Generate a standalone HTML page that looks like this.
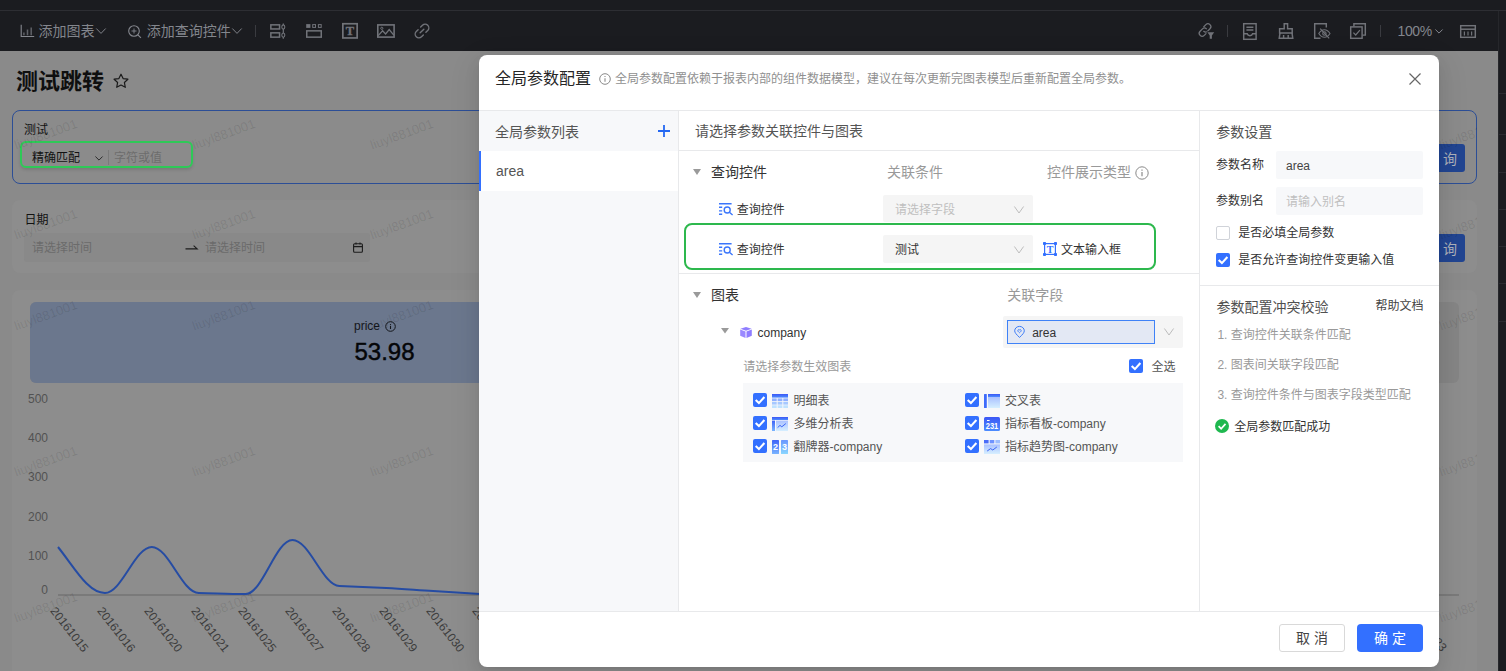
<!DOCTYPE html>
<html lang="zh-CN">
<head>
<meta charset="utf-8">
<title>全局参数配置</title>
<style>
*{box-sizing:border-box;margin:0;padding:0}
html,body{width:1506px;height:671px;overflow:hidden;background:#8a8a8a}
body{position:relative;font-family:"Liberation Sans","Noto Sans CJK SC",sans-serif;font-size:12px;color:#333;line-height:1}
.a{position:absolute;white-space:nowrap}
svg{display:block;overflow:visible}
/* ---------- top bar ---------- */
#top{left:0;top:0;width:1506px;height:50.500px;background:#1b1c20}
#top .ln{left:0;top:10px;width:1506px;height:1px;background:#2d2e33}
#top .t{color:#83868d;font-size:14px;line-height:20px;height:20px;top:21px}
#top .sep{width:1px;height:12px;top:25px;background:#3a3b40}
#top svg{position:absolute}
#side{left:1498px;top:50px;width:8px;height:621px;background:#1b1c20;border-left:1px solid #26272b}
#side i{position:absolute;left:0;width:8px;height:1px;background:#2a2b30}
/* ---------- dimmed page ---------- */
#page{left:0;top:50px;width:1498px;height:621px;background:#8a8a8a;overflow:hidden}
#page .card{background:#8d8d8d;border-radius:6px}
.wm{color:rgba(0,0,0,.1);margin-left:1px;font-size:13px;line-height:16px;transform:rotate(-20deg);transform-origin:0 50%}
.yl{left:20px;width:28px;text-align:right;color:#525252}
.xl{top:553.300px;color:#3c3c3c;transform-origin:0 0;transform:rotate(52deg)}
/* ---------- dialog ---------- */
#dlg{left:479px;top:55px;width:960px;height:612px;background:#fff;border-radius:8px;box-shadow:0 3px 6px -4px rgba(0,0,0,.12),0 6px 16px 0 rgba(0,0,0,.08),0 9px 28px 8px rgba(0,0,0,.05);overflow:hidden}
#dlg .hl{background:#e8e9eb}
.cb{width:14px;height:14px;border-radius:2px;background:#3370ff}
.cb svg{position:absolute;left:0;top:0}
.cb0{width:14px;height:14px;border-radius:2px;background:#fff;border:1px solid #d0d3d9}
.g9{color:#999}
.f14{font-size:14px;line-height:20px;height:20px}
.f12{font-size:12px;line-height:18px;height:18px}
#dlg .f12{margin-top:.5px}
</style>
</head>
<body>
<div id="page" class="a">
<!-- title -->
<div class="a" style="left:16px;top:18px;font-size:22px;line-height:28px;font-weight:bold;color:#0f0f0f">测试跳转</div>
<svg class="a" style="left:113px;top:23px" width="16" height="16" viewBox="0 0 16 16" fill="none" stroke="#1a1a1a" stroke-width="1.2" stroke-linejoin="round"><path d="M8 1.2l2.100 4.400l4.800.6l-3.500 3.300l.9 4.800L8 12l-4.300 2.300l.9-4.800L1.100 6.200l4.800-.6z"/></svg>
<!-- card 1 : selected query control -->
<div class="a" style="left:12px;top:60px;width:1465px;height:74px;border:1px solid #2c4e96;border-radius:8px;background:#8b8b8b"></div>
<div class="a f12" style="left:24px;top:70.500px;color:#121212">测试</div>
<div class="a" style="left:20px;top:91px;width:173px;height:27px;border:2px solid #2ec957;border-radius:6px;box-shadow:0 2px 3px rgba(0,0,0,.12)"></div>
<div class="a f12" style="left:32px;top:99.200px;color:#121212">精确匹配</div>
<svg class="a" style="left:94.600px;top:105.600px" width="8" height="5" viewBox="0 0 8 5" fill="none" stroke="#262626" stroke-width=".950"><path d="M0.400 0.500L4 4.100L7.600 0.500"/></svg>
<div class="a" style="left:108px;top:100px;width:1px;height:15px;background:#7a7a7a"></div>
<div class="a f12" style="left:114px;top:99.200px;color:#6d6d6d">字符或值</div>
<div class="a" style="left:1417px;top:94px;width:48px;height:28px;border-radius:3px;background:#224591;color:#aeb1b9;font-size:14px;line-height:30px;text-align:center">查 询</div>
<!-- card 2 : date -->
<div class="a card" style="left:12px;top:149.800px;width:1465px;height:73.500px;border-radius:8px"></div>
<div class="a f12" style="left:24.500px;top:161px;color:#121212">日期</div>
<div class="a" style="left:24px;top:183.300px;width:346px;height:28.600px;border-radius:3px;background:#898989"></div>
<div class="a f12" style="left:32px;top:188.500px;color:#6b6b6b">请选择时间</div>
<svg class="a" style="left:185px;top:194px" width="13" height="6" viewBox="0 0 13 6" fill="none" stroke="#1c1c1c" stroke-width="1.100"><path d="M0.500 4.900H12.200L8.600 1.600"/></svg>
<div class="a f12" style="left:205px;top:188.500px;color:#6b6b6b">请选择时间</div>
<svg class="a" style="left:352.500px;top:192px" width="10" height="11" viewBox="0 0 10 11" fill="none" stroke="#1c1c1c" stroke-width="1.100"><rect x="0.600" y="1.800" width="8.800" height="8.400" rx="1"/><path d="M0.600 4.600H9.400" stroke-width="1.300"/><path d="M3 0.400V2.600M7 0.400V2.600"/></svg>
<div class="a" style="left:1417px;top:184.300px;width:48px;height:28px;border-radius:3px;background:#224591;color:#aeb1b9;font-size:14px;line-height:30px;text-align:center">查 询</div>
<!-- card 3 : chart -->
<div class="a card" style="left:12px;top:239.700px;width:1465px;height:400px;border-radius:8px"></div>
<div class="a" style="left:30px;top:252px;width:1429px;height:81px;border-radius:6px;background:#858585"></div><div class="a" style="left:30px;top:252px;width:720px;height:81px;border-radius:6px;background:#6b778d"></div>
<div class="a f12" style="left:354px;top:267px;color:#14161b">price</div>
<svg class="a" style="left:384.500px;top:270.800px" width="11" height="11" viewBox="0 0 11 11" fill="none" stroke="#14161b" stroke-width="1"><circle cx="5.500" cy="5.500" r="4.800"/><path d="M5.500 4.800V8" stroke-width="1.100"/><path d="M5.500 3V3.900" stroke-width="1.100"/></svg>
<div class="a" style="left:354.500px;top:288px;font-size:24px;line-height:28px;color:#050608;-webkit-text-stroke:.45px #050608">53.98</div>
<!-- y axis -->
<div class="a f12 yl" style="top:340px">500</div>
<div class="a f12 yl" style="top:378.500px">400</div>
<div class="a f12 yl" style="top:418px">300</div>
<div class="a f12 yl" style="top:457.500px">200</div>
<div class="a f12 yl" style="top:496.500px">100</div>
<div class="a f12 yl" style="top:530.500px">0</div>
<div class="a" style="left:58px;top:544.300px;width:1401px;height:2px;background:#7a7a7a"></div>
<svg class="a" style="left:0;top:0" width="500" height="621" viewBox="0 50 500 621" fill="none"><path d="M58.0 547C74.9 568.1 88.0 593.0 104.9 593C121.8 593.0 134.9 547.0 151.8 547C168.7 547.0 181.8 592.7 198.7 593C215.6 593.3 228.7 594.0 245.6 594C262.5 594.0 275.6 540.0 292.5 540C309.4 540.0 322.5 585.3 339.4 586C356.3 586.7 369.4 587.2 386.3 588C403.2 588.8 416.3 590.0 433.2 591C450.1 592.0 463.2 593.0 480.1 594" stroke="#264ca3" stroke-width="2"/></svg>
<!-- x labels -->
<div class="a f12 xl" style="left:60.3px">20161015</div>
<div class="a f12 xl" style="left:107.2px">20161016</div>
<div class="a f12 xl" style="left:154.1px">20161020</div>
<div class="a f12 xl" style="left:201.0px">20161021</div>
<div class="a f12 xl" style="left:247.9px">20161025</div>
<div class="a f12 xl" style="left:294.8px">20161027</div>
<div class="a f12 xl" style="left:341.7px">20161028</div>
<div class="a f12 xl" style="left:388.6px">20161029</div>
<div class="a f12 xl" style="left:435.5px">20161030</div>
<div class="a f12 xl" style="left:482.4px">20161031</div>
<div class="a f12 xl" style="left:1419.0px">20161123</div>
<div class="a" style="left:12px;top:60px;width:1465px;height:74px;overflow:hidden;border-radius:7px">
<div class="a wm" style="left:1.60px;top:28.0px">liuyl881001</div>
<div class="a wm" style="left:179.80px;top:28.0px">liuyl881001</div>
<div class="a wm" style="left:358.00px;top:28.0px">liuyl881001</div>
<div class="a wm" style="left:536.20px;top:28.0px">liuyl881001</div>
<div class="a wm" style="left:714.40px;top:28.0px">liuyl881001</div>
<div class="a wm" style="left:892.60px;top:28.0px">liuyl881001</div>
<div class="a wm" style="left:1070.80px;top:28.0px">liuyl881001</div>
<div class="a wm" style="left:1249.00px;top:28.0px">liuyl881001</div>
<div class="a wm" style="left:1427.20px;top:28.0px">liuyl881001</div>
</div><div class="a" style="left:12px;top:150px;width:1465px;height:74px;overflow:hidden;border-radius:7px">
<div class="a wm" style="left:1.60px;top:28.0px">liuyl881001</div>
<div class="a wm" style="left:179.80px;top:28.0px">liuyl881001</div>
<div class="a wm" style="left:358.00px;top:28.0px">liuyl881001</div>
<div class="a wm" style="left:536.20px;top:28.0px">liuyl881001</div>
<div class="a wm" style="left:714.40px;top:28.0px">liuyl881001</div>
<div class="a wm" style="left:892.60px;top:28.0px">liuyl881001</div>
<div class="a wm" style="left:1070.80px;top:28.0px">liuyl881001</div>
<div class="a wm" style="left:1249.00px;top:28.0px">liuyl881001</div>
<div class="a wm" style="left:1427.20px;top:28.0px">liuyl881001</div>
</div><div class="a" style="left:12px;top:240.500px;width:1465px;height:381px;overflow:hidden;border-radius:7px">
<div class="a wm" style="left:1.60px;top:28.5px">liuyl881001</div>
<div class="a wm" style="left:1.60px;top:174.5px">liuyl881001</div>
<div class="a wm" style="left:1.60px;top:320.5px">liuyl881001</div>
<div class="a wm" style="left:179.80px;top:28.5px">liuyl881001</div>
<div class="a wm" style="left:179.80px;top:174.5px">liuyl881001</div>
<div class="a wm" style="left:179.80px;top:320.5px">liuyl881001</div>
<div class="a wm" style="left:358.00px;top:28.5px">liuyl881001</div>
<div class="a wm" style="left:358.00px;top:174.5px">liuyl881001</div>
<div class="a wm" style="left:358.00px;top:320.5px">liuyl881001</div>
<div class="a wm" style="left:536.20px;top:28.5px">liuyl881001</div>
<div class="a wm" style="left:536.20px;top:174.5px">liuyl881001</div>
<div class="a wm" style="left:536.20px;top:320.5px">liuyl881001</div>
<div class="a wm" style="left:714.40px;top:28.5px">liuyl881001</div>
<div class="a wm" style="left:714.40px;top:174.5px">liuyl881001</div>
<div class="a wm" style="left:714.40px;top:320.5px">liuyl881001</div>
<div class="a wm" style="left:892.60px;top:28.5px">liuyl881001</div>
<div class="a wm" style="left:892.60px;top:174.5px">liuyl881001</div>
<div class="a wm" style="left:892.60px;top:320.5px">liuyl881001</div>
<div class="a wm" style="left:1070.80px;top:28.5px">liuyl881001</div>
<div class="a wm" style="left:1070.80px;top:174.5px">liuyl881001</div>
<div class="a wm" style="left:1070.80px;top:320.5px">liuyl881001</div>
<div class="a wm" style="left:1249.00px;top:28.5px">liuyl881001</div>
<div class="a wm" style="left:1249.00px;top:174.5px">liuyl881001</div>
<div class="a wm" style="left:1249.00px;top:320.5px">liuyl881001</div>
<div class="a wm" style="left:1427.20px;top:28.5px">liuyl881001</div>
<div class="a wm" style="left:1427.20px;top:174.5px">liuyl881001</div>
<div class="a wm" style="left:1427.20px;top:320.5px">liuyl881001</div>
</div>
</div>

<div id="top" class="a">
<div class="a ln"></div><div class="a" style="left:1498px;top:11px;width:1px;height:40px;background:#26272b"></div>
<!-- bar chart icon -->
<svg style="left:20px;top:24px" width="15" height="14" viewBox="0 0 15 14" fill="none" stroke="#85878e" stroke-width="1.100"><path d="M1.200 0.800V12.500H14.200"/><path d="M3.900 11.200V8.600M7.500 11.200V5.600M11.200 11.200V3.600" stroke-width="1.500" stroke="#5f6167"/></svg>
<div class="a t" style="left:38.5px">添加图表</div>
<svg style="left:96.100px;top:27.700px" width="10" height="6" viewBox="0 0 10 6" fill="none" stroke="#7f8188" stroke-width="1"><path d="M0.300 0.500L5 5.400L9.700 0.500"/></svg>
<!-- zoom plus -->
<svg style="left:128.300px;top:24.900px" width="14" height="14" viewBox="0 0 14 14" fill="none" stroke="#85878e" stroke-width="1.100"><circle cx="6" cy="6" r="5.300"/><path d="M9.900 9.900L12.900 12.900"/><path d="M3.500 6H8.500M6 3.500V8.500" stroke-width=".900"/></svg>
<div class="a t" style="left:146.8px">添加查询控件</div>
<svg style="left:232.400px;top:27.700px" width="10" height="6" viewBox="0 0 10 6" fill="none" stroke="#7f8188" stroke-width="1"><path d="M0.300 0.500L5 5.400L9.700 0.500"/></svg>
<div class="a sep" style="left:255px"></div>
<!-- icon1 : stacked rects + slider -->
<svg style="left:270px;top:23px" width="16" height="16" viewBox="0 0 16 16" fill="none" stroke="#717379" stroke-width="1.500"><rect x="0.850" y="1.850" width="8.700" height="4.100"/><rect x="0.850" y="9.850" width="8.700" height="4.300"/><path d="M13.300 0.400V15.700" stroke-width="1.200"/><ellipse cx="13.300" cy="4" rx="1.500" ry="2.100" fill="#1b1c20" stroke-width="1.100"/><ellipse cx="13.300" cy="12.100" rx="1.500" ry="2.100" fill="#1b1c20" stroke-width="1.100"/></svg>
<!-- icon2 : tabs -->
<svg style="left:306px;top:24px" width="17" height="14" viewBox="0 0 17 14" fill="none" stroke="#717379" stroke-width="1.500"><rect x="0.200" y="0.100" width="4.200" height="3.800" fill="#717379" stroke="none"/><rect x="6.700" y="0.600" width="2.800" height="2.800" stroke-width="1"/><rect x="12.400" y="0.600" width="2.800" height="2.800" stroke-width="1"/><rect x="0.750" y="6.850" width="14.500" height="6.300"/></svg>
<!-- icon3 : T box -->
<svg style="left:342px;top:23px" width="17" height="16" viewBox="0 0 17 16" fill="none" stroke="#717379" stroke-width="1.700"><rect x="0.850" y="0.750" width="14.300" height="14.200"/><text x="8" y="12.300" text-anchor="middle" font-family="Liberation Serif,serif" font-weight="bold" font-size="12.500" fill="#717379" stroke="#717379" stroke-width=".400">T</text></svg>
<!-- icon4 : picture -->
<svg style="left:377px;top:24px" width="18" height="14" viewBox="0 0 18 14" fill="none" stroke="#717379" stroke-width="1.600"><rect x="0.800" y="0.900" width="16.300" height="12.200"/><circle cx="4.800" cy="4.300" r="1.100" stroke-width="1"/><path d="M1.200 11.600L5.600 6.800L8.600 10L12.200 5.600L16.800 11.200" stroke-width="1.300"/></svg>
<!-- icon5 : link -->
<svg style="left:414px;top:23px" width="16" height="16" viewBox="0 0 16 16" fill="none" stroke="#717379" stroke-width="1.400" stroke-linecap="round"><g transform="rotate(-45 8 8)"><path d="M9.800 4.300H12.400a3.700 3.700 0 0 1 0 7.400H9.800"/><path d="M6.200 11.700H3.600a3.700 3.700 0 0 1 0-7.400H6.200"/><path d="M5.400 8H10.600"/></g></svg>
<!-- right side -->
<svg style="left:1198px;top:23px" width="17" height="16" viewBox="0 0 17 16" fill="none" stroke="#717379" stroke-width="1.450" stroke-linecap="round"><g transform="scale(.88)"><path d="M6.600 4.200l2.300-2.300a3.300 3.300 0 0 1 4.700 4.700l-2.700 2.700a3.300 3.300 0 0 1-4.400.2"/><path d="M9.400 11.800l-2.300 2.300a3.300 3.300 0 0 1-4.700-4.700l2.700-2.700a3.300 3.300 0 0 1 4.400-.2"/></g><rect x="8.600" y="8.400" width="8.400" height="7.600" fill="#1b1c20" stroke="none"/><path d="M9.400 9.200h6.800l-2.300 3.300v3.300h-2.200v-3.300z" fill="#717379" stroke="none"/></svg>
<div class="a sep" style="left:1227px"></div>
<svg style="left:1243px;top:22.500px" width="14" height="17" viewBox="0 0 14 17" fill="none" stroke="#717379" stroke-width="1.450"><rect x="0.7" y="0.7" width="12.4" height="15.6"/><path d="M3.400 4.200H10.400M3.400 7H10.400"/><path d="M0.700 10.800H4.200a2.800 2.600 0 0 0 5.400 0H13.100"/></svg>
<svg style="left:1278px;top:23px" width="16" height="16" viewBox="0 0 16 16" fill="none" stroke="#717379" stroke-width="1.450"><path d="M6.200 0.700h3.400v5h4.600v4.200H1.600V5.700h4.600z"/><path d="M2 9.900L1.200 15.300H14.800L14 9.900"/><path d="M5.600 15V12M10.200 15V12"/></svg>
<svg style="left:1314px;top:23px" width="17" height="16" viewBox="0 0 17 16" fill="none" stroke="#717379" stroke-width="1.450"><path d="M12.300 4.500V0.700H0.700V15.300H6.500"/><path d="M4.800 10.500c1.600-2.600 3.500-3.800 5.600-3.800s4 1.200 5.600 3.800c-1.600 2.600-3.500 3.800-5.600 3.800s-4-1.200-5.600-3.800z" stroke-width="1.100"/><circle cx="10.400" cy="10.500" r="1.700" stroke-width="1.100"/><path d="M6.200 5.600L15.200 15.400" stroke-width="1.200"/></svg>
<svg style="left:1350px;top:23px" width="16" height="16" viewBox="0 0 16 16" fill="none" stroke="#717379" stroke-width="1.450"><rect x="0.700" y="3.900" width="11.400" height="11.400"/><path d="M3.900 3.600V0.700H15.300V12.100H12.400"/><path d="M3.400 9.600l2.300 2.400l4.200-4.800" stroke-width="1.200"/></svg>
<div class="a sep" style="left:1380px"></div>
<div class="a t" style="left:1397.500px;letter-spacing:-.4px">100%</div>
<svg style="left:1434.500px;top:29px" width="8" height="5" viewBox="0 0 8 5" fill="none" stroke="#85878e" stroke-width="1"><path d="M0.400 0.500L4 4.100L7.600 0.500"/></svg>
<svg style="left:1460px;top:24.500px" width="16" height="13" viewBox="0 0 16 13" fill="none" stroke="#717379" stroke-width="1.450"><rect x="0.700" y="0.700" width="14.600" height="11.600"/><path d="M0.700 4.200H15.300" stroke-width="1.500"/><path d="M4.400 6.500V10.600M8 6.500V10.600M11.600 6.500V10.600" stroke-width="1.200"/></svg>
</div>
<div id="side" class="a"><i style="top:43px"></i><i style="top:84px"></i><i style="top:122px"></i><i style="top:159px"></i><i style="top:196px"></i><i style="top:233px"></i><i style="top:271px"></i></div>

<div id="dlg" class="a">
<!-- header -->
<div class="a" style="left:16px;top:11.500px;font-size:16px;line-height:24px;color:#262626">全局参数配置</div>
<svg class="a" style="left:120px;top:17.500px" width="12" height="12" viewBox="0 0 12 12" fill="none" stroke="#8a8a8a" stroke-width="1"><circle cx="6" cy="6" r="5.300"/><path d="M6 5.200V8.800M6 3.100V4.100" stroke-width="1.100"/></svg>
<div class="a f12" style="left:136px;top:14px;color:#909090">全局参数配置依赖于报表内部的组件数据模型，建议在每次更新完图表模型后重新配置全局参数。</div>
<svg class="a" style="left:930px;top:18px" width="12" height="12" viewBox="0 0 12 12" fill="none" stroke="#666" stroke-width="1.200"><path d="M0.500 0.500L11.500 11.500M11.500 0.500L0.500 11.500"/></svg>
<div class="a hl" style="left:0;top:55px;width:960px;height:1px"></div>
<!-- left list -->
<div class="a" style="left:0;top:56px;width:199px;height:500px;background:#f7f8fa"></div>
<div class="a hl" style="left:199px;top:56px;width:1px;height:500px"></div>
<div class="a f14" style="left:16px;top:66.500px;color:#555">全局参数列表</div>
<svg class="a" style="left:178.500px;top:70px" width="12" height="12" viewBox="0 0 12 12" fill="none" stroke="#2468f2" stroke-width="1.800"><path d="M6 0V12M0 6H12"/></svg>
<div class="a" style="left:0;top:95.500px;width:199px;height:40px;background:#fff;border-left:2px solid #3370ff"></div>
<div class="a f14" style="left:17px;top:106px;color:#555">area</div>
<!-- middle -->
<div class="a f14" style="left:216px;top:66px;color:#555">请选择参数关联控件与图表</div>
<div class="a hl" style="left:200px;top:95px;width:520px;height:1px"></div>
<svg class="a" style="left:214px;top:113.500px" width="8" height="6" viewBox="0 0 8 6"><path d="M0 0H8L4 6z" fill="#9a9a9a"/></svg>
<div class="a f14" style="left:232px;top:107px;color:#333">查询控件</div>
<div class="a f14 g9" style="left:408px;top:107px">关联条件</div>
<div class="a f14 g9" style="left:568px;top:107px">控件展示类型</div>
<svg class="a" style="left:656px;top:110.500px" width="14" height="14" viewBox="0 0 14 14" fill="none" stroke="#8a8a8a" stroke-width="1"><circle cx="7" cy="7" r="6.200"/><path d="M7 6V10.300M7 3.600V4.800" stroke-width="1.200"/></svg>
<!-- row 1 -->
<svg class="a qi" style="left:240px;top:147.500px" width="14" height="12" viewBox="0 0 14 12" fill="none" stroke="#3b76fb" stroke-width="1.400"><path d="M0 0.700H12.600M0 4.300H3.200M0 7.900H3.200M0 11.300H3.200"/><circle cx="8.200" cy="7" r="3"/><path d="M10.400 9.200L13.600 12"/></svg>
<div class="a f12" style="left:257.800px;top:145px;color:#333">查询控件</div>
<div class="a" style="left:404px;top:140px;width:150px;height:27px;background:#f5f5f5;border-radius:2px"></div>
<div class="a f12" style="left:416px;top:145px;color:#bfbfbf">请选择字段</div>
<svg class="a" style="left:535px;top:150.500px" width="10" height="8" viewBox="0 0 10 8" fill="none" stroke="#bdbdbd" stroke-width="1"><path d="M0.400 0.500L5 7L9.600 0.500"/></svg>
<!-- row 2 -->
<div class="a" style="left:204.500px;top:168px;width:472.300px;height:46.700px;border:2px solid #2db84d;border-radius:8px"></div>
<svg class="a qi" style="left:240px;top:187.800px" width="14" height="12" viewBox="0 0 14 12" fill="none" stroke="#3b76fb" stroke-width="1.400"><path d="M0 0.700H12.600M0 4.300H3.200M0 7.900H3.200M0 11.300H3.200"/><circle cx="8.200" cy="7" r="3"/><path d="M10.400 9.200L13.600 12"/></svg>
<div class="a f12" style="left:257.800px;top:185px;color:#333">查询控件</div>
<div class="a" style="left:404px;top:180px;width:150px;height:28px;background:#f5f5f5;border-radius:2px"></div>
<div class="a f12" style="left:416px;top:185px;color:#333">测试</div>
<svg class="a" style="left:535px;top:190.500px" width="10" height="8" viewBox="0 0 10 8" fill="none" stroke="#bdbdbd" stroke-width="1"><path d="M0.400 0.500L5 7L9.600 0.500"/></svg>
<svg class="a" style="left:564px;top:187px" width="14" height="14" viewBox="0 0 14 14" fill="none" stroke="#3370ff" stroke-width="1.200"><rect x="1.600" y="1.600" width="10.800" height="10.800"/><g fill="#3370ff" stroke="none"><rect x="0" y="0" width="3" height="3" rx=".8"/><rect x="11" y="0" width="3" height="3" rx=".8"/><rect x="0" y="11" width="3" height="3" rx=".8"/><rect x="11" y="11" width="3" height="3" rx=".8"/></g><text x="7" y="10.600" text-anchor="middle" font-family="Liberation Serif,serif" font-weight="bold" font-size="10" fill="#3370ff" stroke="none">T</text></svg>
<div class="a f12" style="left:582px;top:185px;color:#333">文本输入框</div>
<div class="a hl" style="left:200px;top:218px;width:520px;height:1px"></div>
<!-- charts -->
<svg class="a" style="left:214px;top:236.500px" width="8" height="6" viewBox="0 0 8 6"><path d="M0 0H8L4 6z" fill="#9a9a9a"/></svg>
<div class="a f14" style="left:232px;top:230px;color:#333">图表</div>
<div class="a f14 g9" style="left:528.300px;top:230px">关联字段</div>
<svg class="a" style="left:241.800px;top:273px" width="8" height="5.500" viewBox="0 0 8 5.500"><path d="M0 0H8L4 5.500z" fill="#9a9a9a"/></svg>
<svg class="a" style="left:261px;top:271.800px" width="12" height="11" viewBox="0 0 12 11"><path d="M6 0L11.600 1.800L6 3.700L0.400 1.800z" fill="#8f7dff"/><path d="M0.200 2.600L5.500 4.400V11L0.200 8.800z" fill="#9a89ff"/><path d="M11.800 2.600L6.500 4.400V11L11.800 8.800z" fill="#8f7dff"/></svg>
<div class="a f12" style="left:278.500px;top:268px;color:#333">company</div>
<div class="a" style="left:524.200px;top:261px;width:179.800px;height:31.600px;background:#f5f5f5;border-radius:2px"></div>
<div class="a" style="left:528px;top:265px;width:148px;height:23.800px;background:#e3e8f4;border:1px solid #3f82f7"></div>
<svg class="a" style="left:534.600px;top:271px" width="11" height="12" viewBox="0 0 11 12" fill="none" stroke="#3b7bf7" stroke-width="1"><path d="M5.500 11.400C2.400 8.600 0.700 6.600 0.700 4.800a4.800 4.400 0 0 1 9.600 0c0 1.800-1.700 3.800-4.800 6.600z"/><path d="M5.500 6.700C4.300 5.800 3.800 5.200 3.800 4.500a1 1 0 0 1 1.700-.6a1 1 0 0 1 1.700.6c0 .7-.5 1.300-1.700 2.200z" stroke-width=".9"/></svg>
<div class="a f12" style="left:553.200px;top:268px;color:#333">area</div>
<svg class="a" style="left:685px;top:273px" width="10" height="8" viewBox="0 0 10 8" fill="none" stroke="#bdbdbd" stroke-width="1"><path d="M0.400 0.500L5 7L9.600 0.500"/></svg>
<div class="a f12 g9" style="left:264.200px;top:302px">请选择参数生效图表</div>
<div class="a cb" style="left:650px;top:304.200px"><svg width="14" height="14" viewBox="0 0 14 14" fill="none" stroke="#fff" stroke-width="2.100"><path d="M2.700 7L5.900 10.100L11.400 4"/></svg></div>
<div class="a f12" style="left:672.400px;top:302px;color:#555">全选</div>
<div class="a" style="left:264.200px;top:328px;width:439.800px;height:79.300px;background:#f7f8fa"></div>
<svg class="a" style="left:0;top:0" width="0" height="0"><defs>
<linearGradient id="gA" x1="0" y1="0" x2="0" y2="1"><stop offset="0" stop-color="#3b57f5"/><stop offset="1" stop-color="#4c8cff"/></linearGradient>
<linearGradient id="gB" x1="0" y1="0" x2="0" y2="1"><stop offset="0" stop-color="#a9c0ff"/><stop offset="1" stop-color="#d6efff"/></linearGradient>
<linearGradient id="gC" x1="0" y1="0" x2="0" y2="1"><stop offset="0" stop-color="#3e62f8"/><stop offset="1" stop-color="#79b4ff"/></linearGradient>
<linearGradient id="gD" x1="0" y1="0" x2="0" y2="1"><stop offset="0" stop-color="#6a96ff"/><stop offset="1" stop-color="#8ad6ff"/></linearGradient>
</defs></svg>
<div class="a cb" style="left:274.1px;top:338px"><svg width="14" height="14" viewBox="0 0 14 14" fill="none" stroke="#fff" stroke-width="2.100"><path d="M2.700 7L5.900 10.100L11.400 4"/></svg></div>
<svg class="a" style="left:293.1px;top:339px" width="16" height="14" viewBox="0 0 16 14"><rect x="0" y="0" width="16" height="3.600" fill="url(#gA)"/><rect x="0" y="4.4" width="4.700" height="2.700" fill="#8fb0ff"/><rect x="5.65" y="4.4" width="4.700" height="2.700" fill="#8fb0ff"/><rect x="11.3" y="4.4" width="4.700" height="2.700" fill="#8fb0ff"/><rect x="0" y="7.9" width="4.700" height="2.700" fill="#a6c8ff"/><rect x="5.65" y="7.9" width="4.700" height="2.700" fill="#a6c8ff"/><rect x="11.3" y="7.9" width="4.700" height="2.700" fill="#a6c8ff"/><rect x="0" y="11.3" width="4.700" height="2.700" fill="#bfe2ff"/><rect x="5.65" y="11.3" width="4.700" height="2.700" fill="#bfe2ff"/><rect x="11.3" y="11.3" width="4.700" height="2.700" fill="#bfe2ff"/></svg>
<div class="a f12" style="left:314.5px;top:336px;color:#555">明细表</div>
<div class="a cb" style="left:274.1px;top:361px"><svg width="14" height="14" viewBox="0 0 14 14" fill="none" stroke="#fff" stroke-width="2.100"><path d="M2.700 7L5.900 10.100L11.400 4"/></svg></div>
<svg class="a" style="left:293.1px;top:362px" width="16" height="14" viewBox="0 0 16 14"><rect x="0" y="0" width="16" height="3" fill="url(#gA)"/><rect x="0" y="3.600" width="3" height="10.400" fill="url(#gC)"/><rect x="4" y="3.600" width="12" height="10.400" fill="url(#gB)"/><path d="M5.600 10.600L8 8.400L9.800 9.800L13.800 6.600" fill="none" stroke="#3b63f7" stroke-width="1"/></svg>
<div class="a f12" style="left:314.5px;top:359px;color:#555">多维分析表</div>
<div class="a cb" style="left:274.1px;top:384.2px"><svg width="14" height="14" viewBox="0 0 14 14" fill="none" stroke="#fff" stroke-width="2.100"><path d="M2.700 7L5.900 10.100L11.400 4"/></svg></div>
<svg class="a" style="left:293.1px;top:385.2px" width="16" height="14" viewBox="0 0 16 14"><rect x="0" y="0" width="7" height="14" rx=".6" fill="url(#gC)"/><rect x="9" y="0" width="7" height="14" rx=".6" fill="url(#gD)"/><text x="3.500" y="10.300" text-anchor="middle" font-family="Liberation Sans,sans-serif" font-weight="bold" font-size="9" fill="#fff">2</text><text x="12.500" y="10.300" text-anchor="middle" font-family="Liberation Sans,sans-serif" font-weight="bold" font-size="9" fill="#fff">3</text></svg>
<div class="a f12" style="left:314.5px;top:382.2px;color:#555">翻牌器-company</div>
<div class="a cb" style="left:486px;top:338px"><svg width="14" height="14" viewBox="0 0 14 14" fill="none" stroke="#fff" stroke-width="2.100"><path d="M2.700 7L5.900 10.100L11.400 4"/></svg></div>
<svg class="a" style="left:505px;top:339px" width="16" height="14" viewBox="0 0 16 14"><rect x="0" y="0" width="2.800" height="14" rx=".5" fill="#3d6bfb"/><rect x="4" y="0" width="12" height="3" fill="url(#gA)"/><rect x="4" y="3" width="12" height="11" fill="url(#gB)"/></svg>
<div class="a f12" style="left:526px;top:336px;color:#555">交叉表</div>
<div class="a cb" style="left:486px;top:361px"><svg width="14" height="14" viewBox="0 0 14 14" fill="none" stroke="#fff" stroke-width="2.100"><path d="M2.700 7L5.900 10.100L11.400 4"/></svg></div>
<svg class="a" style="left:505px;top:362px" width="16" height="14" viewBox="0 0 16 14"><rect x="0" y="0" width="16" height="14" rx="1.500" fill="url(#gA)"/><rect x="3" y="3" width="2.600" height="1" fill="#fff"/><text x="8" y="11.600" text-anchor="middle" font-family="Liberation Sans,sans-serif" font-weight="bold" font-size="8.500" fill="#fff" textLength="12.500" lengthAdjust="spacingAndGlyphs">231</text></svg>
<div class="a f12" style="left:526px;top:359px;color:#555">指标看板-company</div>
<div class="a cb" style="left:486px;top:384.2px"><svg width="14" height="14" viewBox="0 0 14 14" fill="none" stroke="#fff" stroke-width="2.100"><path d="M2.700 7L5.900 10.100L11.400 4"/></svg></div>
<svg class="a" style="left:505px;top:385.2px" width="16" height="14" viewBox="0 0 16 14"><rect x="0" y="0" width="4.600" height="3.400" fill="#4a6cf9"/><rect x="5.700" y="0" width="4.600" height="3.400" fill="#6f93ff"/><rect x="11.400" y="0" width="4.600" height="3.400" fill="#9dbdff"/><rect x="0" y="4.400" width="16" height="9.600" fill="url(#gB)"/><path d="M3.200 11L6.600 8.600L8.800 10L12.800 7" fill="none" stroke="#3b63f7" stroke-width="1"/></svg>
<div class="a f12" style="left:526px;top:382.2px;color:#555">指标趋势图-company</div>
<!-- right panel -->
<div class="a hl" style="left:720px;top:56px;width:1px;height:500px"></div>
<div class="a f14" style="left:737.200px;top:67px;color:#505050">参数设置</div>
<div class="a f12" style="left:737px;top:100.700px;color:#333">参数名称</div>
<div class="a" style="left:797.200px;top:96.300px;width:146.800px;height:27.400px;background:#f7f8fa;border-radius:2px"></div>
<div class="a f12" style="left:807px;top:101.500px;color:#444">area</div>
<div class="a f12" style="left:737px;top:136.800px;color:#333">参数别名</div>
<div class="a" style="left:797.200px;top:132px;width:146.800px;height:27.800px;background:#f7f8fa;border-radius:2px"></div>
<div class="a f12" style="left:807px;top:137px;color:#bfbfbf">请输入别名</div>
<div class="a cb0" style="left:737.200px;top:170.700px"></div>
<div class="a f12" style="left:759.300px;top:168.700px;color:#333">是否必填全局参数</div>
<div class="a cb" style="left:737.200px;top:197.500px"><svg width="14" height="14" viewBox="0 0 14 14" fill="none" stroke="#fff" stroke-width="2.100"><path d="M2.700 7L5.900 10.100L11.400 4"/></svg></div>
<div class="a f12" style="left:759.300px;top:195.500px;color:#333">是否允许查询控件变更输入值</div>
<div class="a hl" style="left:721px;top:230px;width:239px;height:1px"></div>
<div class="a f14" style="left:737.600px;top:242px;color:#505050">参数配置冲突校验</div>
<div class="a f12" style="left:896.500px;top:241.300px;color:#444">帮助文档</div>
<div class="a f12 g9" style="left:738.400px;top:270.500px">1. 查询控件关联条件匹配</div>
<div class="a f12 g9" style="left:738.400px;top:300.400px">2. 图表间关联字段匹配</div>
<div class="a f12 g9" style="left:738.400px;top:330.500px">3. 查询控件条件与图表字段类型匹配</div>
<svg class="a" style="left:735.800px;top:364.200px" width="14" height="14" viewBox="0 0 14 14"><circle cx="7" cy="7" r="7" fill="#1fb84f"/><path d="M3.600 7.200L6.100 9.700L10.500 4.900" fill="none" stroke="#fff" stroke-width="1.700"/></svg>
<div class="a f12" style="left:755.300px;top:362.200px;color:#333">全局参数匹配成功</div>
<!-- footer -->
<div class="a hl" style="left:0;top:556px;width:960px;height:1px"></div>
<div class="a" style="left:800.300px;top:569px;width:65.500px;height:28px;border:1px solid #d9d9d9;border-radius:3px;background:#fff;color:#444;font-size:14px;line-height:26px;text-align:center">取 消</div>
<div class="a" style="left:878px;top:569px;width:66px;height:28px;border-radius:4px;background:#3370ff;color:#fff;font-size:14px;line-height:28px;text-align:center">确 定</div>
</div>

</body>
</html>
